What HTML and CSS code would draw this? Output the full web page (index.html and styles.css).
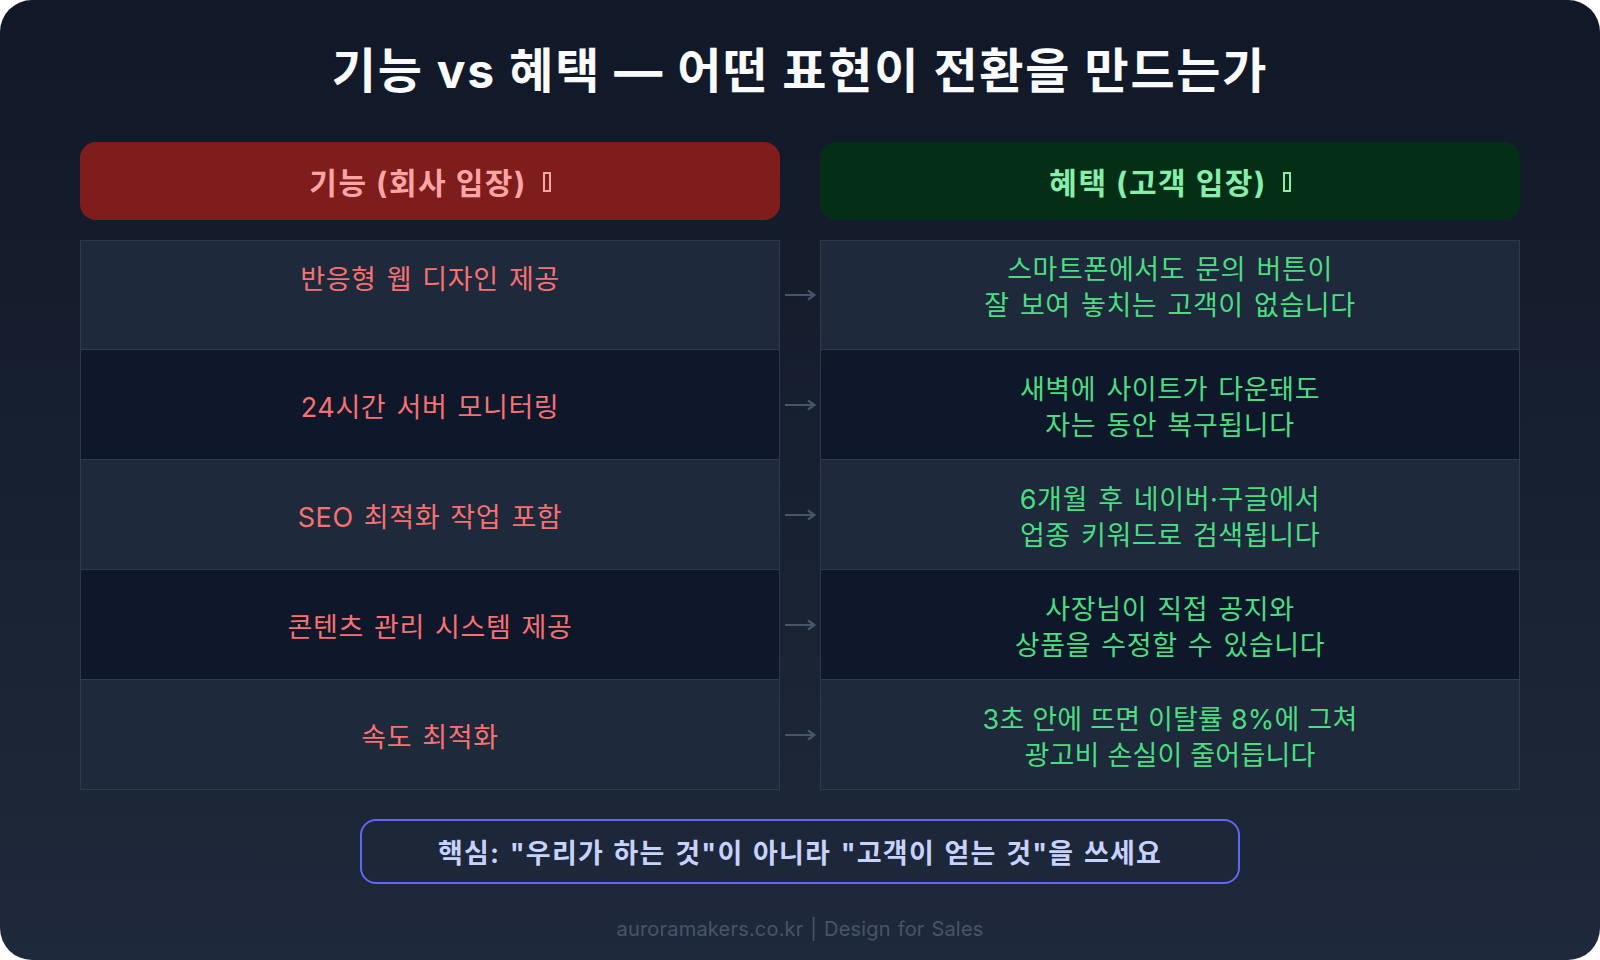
FILE: index.html
```html
<!DOCTYPE html>
<html lang="ko">
<head>
<meta charset="utf-8">
<title>기능 vs 혜택</title>
<link rel="stylesheet" href="styles.css">
</head>
<body>
<div class="card">
  <h1 class="title">기능 vs 혜택 — 어떤 표현이 전환을 만드는가</h1>
  <div class="grid">
    <div class="pill pill-red">기능 (회사 입장) <span class="tofu"></span></div>
    <div class="gap"></div>
    <div class="pill pill-green">혜택 (고객 입장) <span class="tofu"></span></div>

    <div class="cell feat odd first first-left">반응형 웹 디자인 제공</div>
    <div class="arrow first-arrow"><svg width="32" height="12" viewBox="0 0 32 12"><path d="M1 6H29" stroke="#475569" stroke-width="2"/><path d="M24 1.5L30.5 6L24 10.5" fill="none" stroke="#475569" stroke-width="2.2"/></svg></div>
    <div class="cell ben odd first first-right">스마트폰에서도 문의 버튼이<br>잘 보여 놓치는 고객이 없습니다</div>

    <div class="cell feat even">24시간 서버 모니터링</div>
    <div class="arrow"><svg width="32" height="12" viewBox="0 0 32 12"><path d="M1 6H29" stroke="#475569" stroke-width="2"/><path d="M24 1.5L30.5 6L24 10.5" fill="none" stroke="#475569" stroke-width="2.2"/></svg></div>
    <div class="cell ben even">새벽에 사이트가 다운돼도<br>자는 동안 복구됩니다</div>

    <div class="cell feat odd">SEO 최적화 작업 포함</div>
    <div class="arrow"><svg width="32" height="12" viewBox="0 0 32 12"><path d="M1 6H29" stroke="#475569" stroke-width="2"/><path d="M24 1.5L30.5 6L24 10.5" fill="none" stroke="#475569" stroke-width="2.2"/></svg></div>
    <div class="cell ben odd">6개월 후 네이버·구글에서<br>업종 키워드로 검색됩니다</div>

    <div class="cell feat even">콘텐츠 관리 시스템 제공</div>
    <div class="arrow"><svg width="32" height="12" viewBox="0 0 32 12"><path d="M1 6H29" stroke="#475569" stroke-width="2"/><path d="M24 1.5L30.5 6L24 10.5" fill="none" stroke="#475569" stroke-width="2.2"/></svg></div>
    <div class="cell ben even">사장님이 직접 공지와<br>상품을 수정할 수 있습니다</div>

    <div class="cell feat odd">속도 최적화</div>
    <div class="arrow"><svg width="32" height="12" viewBox="0 0 32 12"><path d="M1 6H29" stroke="#475569" stroke-width="2"/><path d="M24 1.5L30.5 6L24 10.5" fill="none" stroke="#475569" stroke-width="2.2"/></svg></div>
    <div class="cell ben odd tight">3초 안에 뜨면 이탈률 8%에 그쳐<br>광고비 손실이 줄어듭니다</div>
  </div>
  <div class="callout">핵심: "우리가 하는 것"이 아니라 "고객이 얻는 것"을 쓰세요</div>
  <div class="footer">auroramakers.co.kr | Design for Sales</div>
</div>
</body>
</html>
```
FILE: styles.css
```css
html, body {
  margin: 0;
  padding: 0;
  background: #ffffff;
}
body {
  width: 1600px;
  height: 960px;
  overflow: hidden;
  font-family: "Inter", "Noto Sans CJK KR", sans-serif;
}
.card {
  width: 1600px;
  height: 960px;
  box-sizing: border-box;
  border-radius: 32px;
  background: linear-gradient(180deg, #111827 0%, #1e293b 100%);
  padding: 43px 80px 0;
  display: flex;
  flex-direction: column;
  align-items: center;
}
.title {
  margin: 0;
  height: 56px;
  line-height: 56px;
  font-size: 48px;
  font-weight: 700;
  color: #f8fafc;
  text-align: center;
  letter-spacing: 1.8px;
}
.grid {
  margin-top: 43px;
  display: grid;
  grid-template-columns: 700px 40px 700px;
  grid-template-rows: 78px 130px 110px 110px 110px 110px;
}
.pill {
  border-radius: 16px;
  display: flex;
  align-items: center;
  justify-content: center;
  gap: 16px;
  font-size: 30px;
  font-weight: 700;
  height: 78px;
  letter-spacing: 1.5px;
}
.pill-red {
  background: #7f1d1d;
  color: #fca5a5;
}
.pill-green {
  background: #052e16;
  color: #86efac;
}
.tofu {
  display: inline-block;
  width: 4px;
  height: 16px;
  border: 2px solid currentColor;
  margin-top: 2px;
}
.cell {
  border: 1px solid #2c3a4d;
  border-top: none;
  display: flex;
  align-items: center;
  justify-content: center;
  text-align: center;
  font-size: 27px;
  line-height: 36px;
  letter-spacing: 0.6px;
  word-spacing: 2px;
  box-sizing: border-box;
  height: 110px;
  padding-top: 7px;
}
.cell.first {
  margin-top: 20px;
  border-top: 1px solid #2c3a4d;
}
.first-left {
  padding-bottom: 37px;
}
.first-right {
  padding-bottom: 21px;
}
.tight {
  letter-spacing: 0.2px;
  word-spacing: 0;
}
.odd {
  background: #1e293b;
}
.even {
  background: #0f172a;
}
.feat {
  color: #f87171;
}
.ben {
  color: #4ade80;
}
.arrow {
  display: flex;
  align-items: center;
  justify-content: center;
  height: 110px;
}
.first-arrow {
  margin-top: 20px;
}
.callout {
  margin-top: 29px;
  width: 880px;
  height: 65px;
  box-sizing: border-box;
  border: 2px solid #6366f1;
  border-radius: 16px;
  display: flex;
  align-items: center;
  justify-content: center;
  font-size: 27px;
  font-weight: 700;
  letter-spacing: 1.2px;
  word-spacing: 2px;
  color: #c7d2fe;
}
.footer {
  margin-top: 30px;
  font-size: 20px;
  line-height: 30px;
  letter-spacing: 0.2px;
  word-spacing: 1px;
  color: #475569;
}
```
